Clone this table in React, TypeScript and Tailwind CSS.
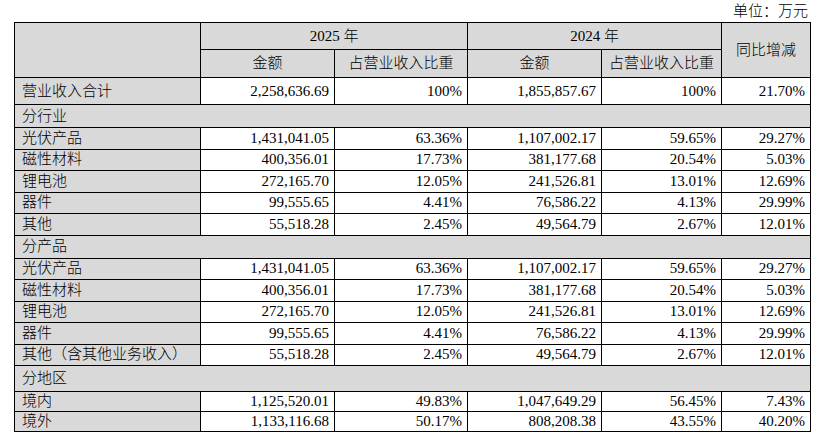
import React from "react";

type Row = { label: string; a: string; ap: string; b: string; bp: string; yoy: string };

const products: Row[] = [
  { label: "光伏产品", a: "1,431,041.05", ap: "63.36%", b: "1,107,002.17", bp: "59.65%", yoy: "29.27%" },
  { label: "磁性材料", a: "400,356.01", ap: "17.73%", b: "381,177.68", bp: "20.54%", yoy: "5.03%" },
  { label: "锂电池", a: "272,165.70", ap: "12.05%", b: "241,526.81", bp: "13.01%", yoy: "12.69%" },
  { label: "器件", a: "99,555.65", ap: "4.41%", b: "76,586.22", bp: "4.13%", yoy: "29.99%" },
];

const industry: Row[] = [...products, { label: "其他", a: "55,518.28", ap: "2.45%", b: "49,564.79", bp: "2.67%", yoy: "12.01%" }];
const product: Row[] = [
  ...products,
  { label: "其他（含其他业务收入）", a: "55,518.28", ap: "2.45%", b: "49,564.79", bp: "2.67%", yoy: "12.01%" },
];
const region: Row[] = [
  { label: "境内", a: "1,125,520.01", ap: "49.83%", b: "1,047,649.29", bp: "56.45%", yoy: "7.43%" },
  { label: "境外", a: "1,133,116.68", ap: "50.17%", b: "808,208.38", bp: "43.55%", yoy: "40.20%" },
];

const cell = "border border-black px-[5px] text-right bg-white";
const head = "border border-black bg-[#d9d9d9] text-center font-light";
const label = "border border-black bg-[#d9d9d9] pl-[7px] text-left font-light";

const DataRow = ({ r, short }: { r: Row; short?: boolean }) => (
  <tr className={short ? "h-[20px] leading-none" : "h-[21.5px] leading-none"}>
    <td className={label}>{r.label}</td>
    <td className={cell}>{r.a}</td>
    <td className={cell}>{r.ap}</td>
    <td className={cell}>{r.b}</td>
    <td className={cell}>{r.bp}</td>
    <td className={cell}>{r.yoy}</td>
  </tr>
);

const Section = ({ title, tall }: { title: string; tall?: boolean }) => (
  <tr className={tall ? "h-[26px] leading-none" : "h-[23px] leading-none"}>
    <td colSpan={6} className={label}>
      {title}
    </td>
  </tr>
);

export default function App() {
  return (
    <div
      className="w-[813px] h-[439px] bg-white text-[15px] text-black"
      style={{ fontFamily: '"Liberation Serif", "Noto Sans CJK SC", serif' }}
    >
      <div className="flex justify-end pr-[5px] pt-[2px] h-[22px] leading-[18px] font-light">单位：万元</div>
      <table className="ml-[14px] w-[796px] table-fixed border-collapse">
        <colgroup>
          <col className="w-[186px]" />
          <col className="w-[134px]" />
          <col className="w-[133px]" />
          <col className="w-[134px]" />
          <col className="w-[120px]" />
          <col className="w-[89px]" />
        </colgroup>
        <thead>
          <tr className="h-[27px] leading-none">
            <th rowSpan={2} className={head}></th>
            <th colSpan={2} className={head}>2025 年</th>
            <th colSpan={2} className={head}>2024 年</th>
            <th rowSpan={2} className={head}>同比增减</th>
          </tr>
          <tr className="h-[28px] leading-none">
            <th className={head}>金额</th>
            <th className={head}>占营业收入比重</th>
            <th className={head}>金额</th>
            <th className={head}>占营业收入比重</th>
          </tr>
        </thead>
        <tbody>
          <tr className="h-[27px] leading-none">
            <td className={label}>营业收入合计</td>
            <td className={cell}>2,258,636.69</td>
            <td className={cell}>100%</td>
            <td className={cell}>1,855,857.67</td>
            <td className={cell}>100%</td>
            <td className={cell}>21.70%</td>
          </tr>
          <Section title="分行业" />
          {industry.map((r) => (
            <DataRow key={"i" + r.label} r={r} />
          ))}
          <Section title="分产品" />
          {product.map((r) => (
            <DataRow key={"p" + r.label} r={r} />
          ))}
          <Section title="分地区" tall />
          {region.map((r) => (
            <DataRow key={"r" + r.label} r={r} short />
          ))}
        </tbody>
      </table>
    </div>
  );
}
